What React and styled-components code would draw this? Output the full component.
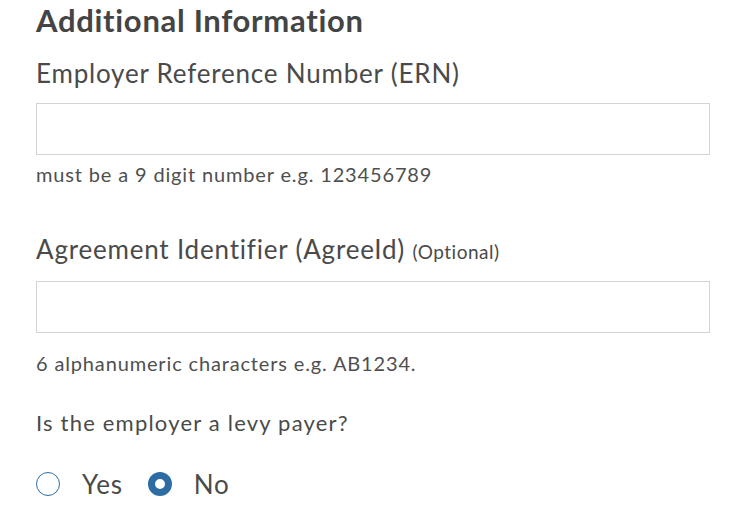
import React from 'react';
import styled, { createGlobalStyle } from 'styled-components';

const GlobalStyle = createGlobalStyle`
  html, body {
    margin: 0;
    padding: 0;
    background: #ffffff;
  }
  body {
    font-family: Lato, "Noto Sans", sans-serif;
    color: #4a4a4a;
  }
`;

const Page = styled.div`
  padding: 0 32px 0 36px;
  width: 674px;
`;

const Heading = styled.h2`
  margin: 0;
  padding-top: 2px;
  font-size: 31px;
  font-weight: 700;
  line-height: 36px;
  letter-spacing: 0.7px;
  color: #444444;
`;

const Field = styled.div`
  display: flex;
  flex-direction: column;
  margin-top: ${(p) => p.$top}px;
`;

const Label = styled.label`
  font-size: 26px;
  line-height: 30px;
  letter-spacing: 0.8px;
  color: #4a4a4a;
`;

const Optional = styled.span`
  font-size: 19px;
  line-height: 1;
  letter-spacing: 0.5px;
`;

const Input = styled.input`
  box-sizing: border-box;
  width: 100%;
  height: 52px;
  margin-top: ${(p) => p.$top}px;
  border: 1px solid #d4d4d4;
  border-radius: 0;
  font-family: inherit;
  font-size: 20px;
  padding: 0 12px;
  outline: none;
`;

const Hint = styled.div`
  margin-top: ${(p) => p.$top}px;
  font-size: 20px;
  line-height: 24px;
  letter-spacing: 0.85px;
  color: #4f4f4f;
`;

const Question = styled.div`
  margin-top: 34px;
  font-size: 22px;
  line-height: 28px;
  letter-spacing: 1.2px;
  color: #4a4a4a;
`;

const RadioGroup = styled.div`
  display: flex;
  align-items: center;
  margin-top: 31px;
  gap: 25px;
`;

const Option = styled.label`
  display: flex;
  align-items: center;
  gap: 22px;
  font-size: 26px;
  line-height: 32px;
  letter-spacing: 0.8px;
`;

const Circle = styled.span`
  box-sizing: border-box;
  width: 24px;
  height: 24px;
  border-radius: 50%;
  border: ${(p) => (p.$checked ? '7px solid #2e6da4' : '1.5px solid #2e6da4')};
  background: #fff;
`;

export default function App() {
  return (
    <>
      <GlobalStyle />
      <Page>
        <Heading>Additional Information</Heading>
        <Field $top={20}>
          <Label>Employer Reference Number (ERN)</Label>
          <Input type="text" $top={15} />
          <Hint $top={7}>must be a 9 digit number e.g. 123456789</Hint>
        </Field>
        <Field $top={48}>
          <Label>
            Agreement Identifier (AgreeId) <Optional>(Optional)</Optional>
          </Label>
          <Input type="text" $top={17} />
          <Hint $top={18}>6 alphanumeric characters e.g. AB1234.</Hint>
        </Field>
        <Question>Is the employer a levy payer?</Question>
        <RadioGroup>
          <Option>
            <Circle />
            Yes
          </Option>
          <Option>
            <Circle $checked />
            No
          </Option>
        </RadioGroup>
      </Page>
    </>
  );
}
